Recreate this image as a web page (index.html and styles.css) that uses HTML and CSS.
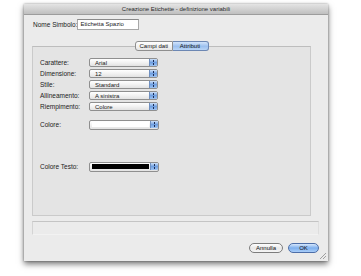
FILE: index.html
```html
<!DOCTYPE html>
<html>
<head>
<meta charset="utf-8">
<link rel="stylesheet" href="styles.css">
</head>
<body>
<div class="window">
  <div class="titlebar">Creazione Etichette - definizione variabili</div>
  <div class="content">
    <div class="name-row">
      <span class="name-label">Nome Simbolo:</span>
      <span class="textfield">Etichetta Spazio</span>
    </div>
    <div class="tabs">
      <span class="tab">Campi dati</span>
      <span class="tab tab-on">Attributi</span>
    </div>
    <div class="panel">
      <div class="row"><span class="lbl">Carattere:</span><span class="select"><span class="val">Arial</span><span class="stepper"></span></span></div>
      <div class="row"><span class="lbl">Dimensione:</span><span class="select"><span class="val">12</span><span class="stepper"></span></span></div>
      <div class="row"><span class="lbl">Stile:</span><span class="select"><span class="val">Standard</span><span class="stepper"></span></span></div>
      <div class="row"><span class="lbl">Allineamento:</span><span class="select"><span class="val">A sinistra</span><span class="stepper"></span></span></div>
      <div class="row"><span class="lbl">Riempimento:</span><span class="select"><span class="val">Colore</span><span class="stepper"></span></span></div>
      <div class="row row-colore"><span class="lbl">Colore:</span><span class="select select-color"><span class="swatch swatch-white"></span><span class="stepper"></span></span></div>
      <div class="row row-testo"><span class="lbl">Colore Testo:</span><span class="select select-color"><span class="swatch swatch-black"></span><span class="stepper"></span></span></div>
    </div>
    <div class="status"></div>
    <div class="buttons">
      <span class="btn">Annulla</span>
      <span class="btn btn-ok">OK</span>
    </div>
  </div>
  <div class="grip"></div>
</div>
</body>
</html>
```
FILE: styles.css
```css
html, body {
  margin: 0;
  padding: 0;
  background: #ffffff;
}
body {
  font-family: "Liberation Sans", Arial, sans-serif;
  font-size: 6.5px;
  color: #1a1a1a;
  width: 361px;
  height: 276px;
  overflow: hidden;
  white-space: nowrap;
}
.window {
  position: relative;
  margin: 4px 0 0 24px;
  width: 304px;
  height: 257px;
  background: #ebebeb;
  box-shadow: 0 3px 6px rgba(0,0,0,0.55), 0 0 2px rgba(0,0,0,0.35);
  display: flex;
  flex-direction: column;
}
.titlebar {
  height: 11px;
  line-height: 11px;
  text-align: center;
  font-size: 6px;
  color: #2a2a2a;
  background: linear-gradient(#e4e4e4, #bfbfbf);
  border-bottom: 1px solid #9c9c9c;
  box-sizing: border-box;
}
.content {
  flex: 1;
  display: flex;
  flex-direction: column;
  padding: 0 9px 0 8px;
}
.name-row {
  display: flex;
  align-items: center;
  margin-top: 5px;
  height: 9px;
}
.name-label {
  flex: 0 0 44px;
  padding-left: 1px;
}
.textfield {
  width: 58px;
  height: 9px;
  line-height: 9px;
  background: #ffffff;
  border: 1px solid #a8a8a8;
  border-top-color: #8a8a8a;
  padding-left: 2px;
  font-size: 6px;
}
.tabs {
  display: flex;
  justify-content: center;
  width: 279px;
  margin-top: 12px;
  margin-bottom: -5px;
  position: relative;
  z-index: 1;
}
.tab {
  height: 8px;
  line-height: 8px;
  padding: 0 4px;
  border: 1px solid #8e8e8e;
  background: linear-gradient(#ffffff, #e6e6e6);
  font-size: 6px;
  color: #111;
  text-align: center;
}
.tab:first-child {
  border-radius: 3px 0 0 3px;
  width: 28px;
}
.tab-on {
  border-radius: 0 3px 3px 0;
  border-left: none;
  width: 27px;
  background: linear-gradient(#d2e4fb, #9cc0ef 55%, #b9d5f7);
  border-color: #6c87b3;
}
.panel {
  width: 270px;
  height: 158px;
  background: #e4e4e4;
  border: 1px solid #cacaca;
  border-top-color: #bdbdbd;
  padding: 10px 0 0 7px;
  display: flex;
  flex-direction: column;
}
.row {
  display: flex;
  align-items: center;
  height: 11px;
}
.lbl {
  flex: 0 0 49px;
  color: #222;
}
.select {
  position: relative;
  width: 67px;
  height: 7px;
  border: 1px solid #8f8f8f;
  border-radius: 2px;
  background: linear-gradient(#ffffff, #f2f2f2 50%, #e2e2e2);
  display: flex;
  align-items: center;
  font-size: 6px;
}
.val {
  padding-left: 5px;
  flex: 1;
}
.stepper {
  width: 7px;
  height: 7px;
  border-left: 1px solid #6f8fbf;
  border-radius: 0 1px 1px 0;
  background:
    linear-gradient(#1c2c55, #1c2c55) 3px 1px / 1px 2px no-repeat,
    linear-gradient(#1c2c55, #1c2c55) 3px 4px / 1px 2px no-repeat,
    linear-gradient(#cfe2fa, #6f9fe0 50%, #9fc4f3);
}
.row-colore {
  margin-top: 7px;
}
.row-testo {
  margin-top: 31px;
}
.select-color {
  width: 68px;
  height: 8px;
}
.swatch {
  flex: 1;
  height: 5px;
  margin: 0 1px 0 2px;
}
.swatch-white {
  background: #ffffff;
}
.swatch-black {
  background: #000000;
}
.status {
  width: 285px;
  height: 12px;
  margin-top: 5px;
  background: #ebebeb;
  border-top: 1px solid #c4c4c4;
  border-left: 1px solid #d4d4d4;
  border-right: 1px solid #dedede;
  border-bottom: 1px solid #f2f2f2;
}
.buttons {
  display: flex;
  justify-content: flex-end;
  gap: 5px;
  margin-top: 8px;
  width: 287px;
}
.btn {
  height: 8px;
  line-height: 8px;
  border: 1px solid #7d7d7d;
  border-radius: 5px;
  background: linear-gradient(#ffffff, #e8e8e8 50%, #f6f6f6);
  text-align: center;
  font-size: 6px;
  width: 32px;
  color: #111;
}
.btn-ok {
  width: 29px;
  border-color: #4d6ea8;
  background: linear-gradient(#d6e7fc, #7eb0ee 50%, #a9cdf8);
}
.grip {
  position: absolute;
  right: 2px;
  bottom: 2px;
  width: 6px;
  height: 6px;
  background: linear-gradient(135deg, transparent 45%, #a0a0a0 45%, #a0a0a0 52%, transparent 52%, transparent 70%, #a0a0a0 70%, #a0a0a0 77%, transparent 77%);
}
```
